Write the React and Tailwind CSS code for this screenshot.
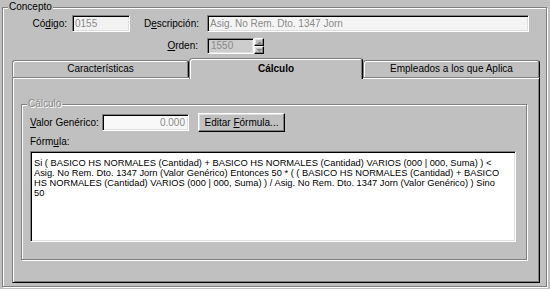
const sunken = 'border border-t-[#808080] border-l-[#808080] border-r-white border-b-white shadow-[inset_1px_1px_0_#000,inset_-1px_-1px_0_#dfdfdf]'
const raised = 'border border-t-white border-l-white border-r-black border-b-black shadow-[inset_-1px_-1px_0_#808080,inset_1px_1px_0_#dfdfdf]'
const etched = 'border border-[#808080] shadow-[inset_1px_1px_0_#fff,1px_1px_0_#fff]'

const formula = [
  'Si ( BASICO HS NORMALES (Cantidad) + BASICO HS NORMALES (Cantidad) VARIOS (000 | 000, Suma) ) <',
  'Asig. No Rem. Dto. 1347 Jorn (Valor Genérico) Entonces 50 * ( ( BASICO HS NORMALES (Cantidad) + BASICO',
  'HS NORMALES (Cantidad) VARIOS (000 | 000, Suma) ) / Asig. No Rem. Dto. 1347 Jorn (Valor Genérico) ) Sino',
  '50',
]

function Spinner() {
  return (
    <div className="flex flex-col w-[10px] h-[16px]">
      {[0, 1].map((i) => (
        <div key={i} className={`${raised} flex-1 flex items-center justify-center`}>
          <svg width="5" height="3" viewBox="0 0 5 3">
            {i === 0
              ? <path d="M2.5 0 L5 3 L0 3 Z" fill="#8a8a8a" />
              : <path d="M0 0 L5 0 L2.5 3 Z" fill="#8a8a8a" />}
          </svg>
        </div>
      ))}
    </div>
  )
}

function Tab({ label, active, width }) {
  if (active) {
    return (
      <div
        className={`relative z-10 ${width} h-[21px] -mb-[2px] bg-[#c0c0c0] rounded-t-[3px] border-t border-l border-r border-t-[#808080] border-l-[#808080] border-r-black shadow-[inset_1px_1px_0_#fff,inset_-1px_0_0_#808080] flex items-center justify-center font-bold pb-[1px]`}
      >
        {label}
      </div>
    )
  }
  return (
    <div
      className={`${width} h-[17px] mt-[2px] rounded-t-[3px] border-t border-l border-r border-t-[#808080] border-l-[#808080] border-r-black shadow-[inset_1px_1px_0_#fff,inset_-1px_0_0_#808080] flex items-center justify-center`}
    >
      {label}
    </div>
  )
}

export default function App() {
  return (
    <div className="w-[550px] h-[289px] bg-[#c0c0c0] pt-[1px] pl-[2px] font-['Liberation_Sans',Arial,sans-serif] text-[10px] leading-[12px] text-black overflow-hidden">
      <fieldset className={`${etched} w-[545px] h-[286px]`}>
        <legend className="ml-[5px] px-[1px] bg-[#c0c0c0] leading-[12px]">Concepto</legend>

        <div className="flex items-center h-[17px] mt-[2px]">
          <span className="w-[64px] text-right">Có<u>d</u>igo:</span>
          <div className={`${sunken} ml-[5px] w-[58px] h-[17px] bg-[#f2f2f2] text-[#8a8a8a] pl-[2px] flex items-center`}>0155</div>
          <span className="w-[69px] text-right">D<u>e</u>scripción:</span>
          <div className={`${sunken} ml-[8px] w-[322px] h-[17px] bg-[#f4f4f4] text-[#8a8a8a] pl-[2px] flex items-center`}>Asig. No Rem. Dto. 1347 Jorn</div>
        </div>

        <div className="flex items-center h-[16px] mt-[6px]">
          <span className="w-[195px] text-right"><u>O</u>rden:</span>
          <div className={`${sunken} ml-[9px] w-[47px] h-[16px] bg-[#cdcdcd] text-[#8a8a8a] pl-[3px] flex items-center`}>1550</div>
          <Spinner />
        </div>

        <div className="ml-[9px] mt-[4px] w-[528px]">
          <div className="flex items-start h-[19px]">
            <Tab label="Características" width="w-[177px]" />
            <Tab label="Cálculo" width="w-[174px]" active />
            <Tab label="Empleados a los que Aplica" width="w-[177px]" />
          </div>
          <div className="h-[206px] border border-t-[#808080] border-l-[#808080] border-r-black border-b-black shadow-[inset_1px_1px_0_#fff,inset_-1px_-1px_0_#808080]">
            <fieldset className={`${etched} ml-[8px] mt-[20px] w-[506px] h-[162px]`}>
              <legend className="ml-[5px] px-[1px] bg-[#c0c0c0] text-[#8a8a8a] [text-shadow:1px_1px_0_#fff]">Cálculo</legend>

              <div className="flex items-center h-[19px] mt-[3px] pl-[8px]">
                <span className="w-[72px]"><u>V</u>alor Genérico:</span>
                <div className={`${sunken} w-[87px] h-[17px] bg-[#f8f8f8] text-[#8a8a8a] pr-[3px] flex items-center justify-end`}>0.000</div>
                <button className={`${raised} ml-[9px] w-[87px] h-[19px] flex items-center justify-center whitespace-pre`}>
                  {'Editar '}<u>F</u>{'órmula...'}
                </button>
              </div>

              <div className="pl-[8px] mt-[4px]">Fórm<u>u</u>la:</div>
              <div className={`${sunken} ml-[8px] mt-[3px] w-[486px] h-[91px] bg-white pl-[3px] pt-[6px] text-[9.3px] leading-[10px]`}>
                {formula.map((line, i) => (
                  <div key={i} className="whitespace-pre">{line}</div>
                ))}
              </div>
            </fieldset>
          </div>
        </div>
      </fieldset>
    </div>
  )
}
